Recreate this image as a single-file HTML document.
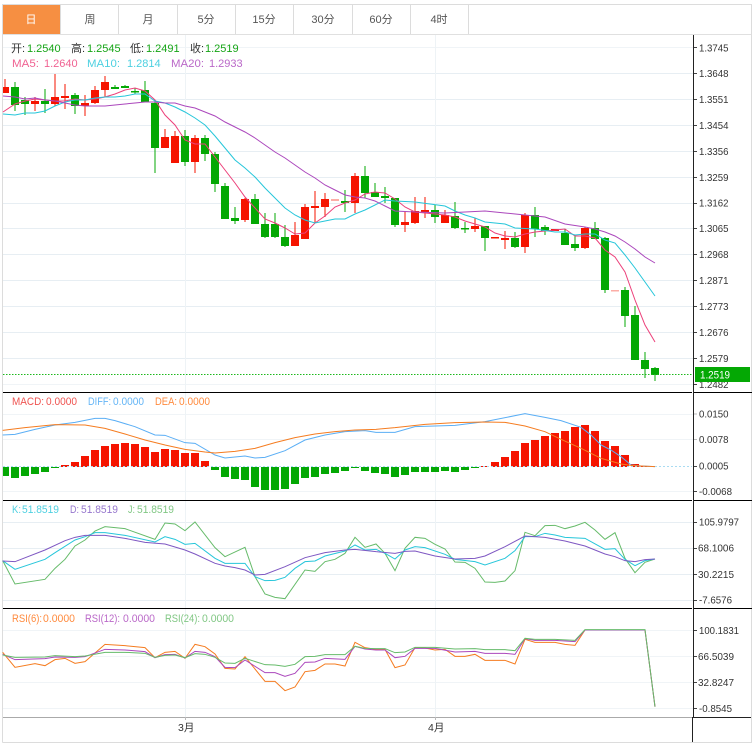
<!DOCTYPE html>
<html lang="zh">
<head>
<meta charset="utf-8">
<title>K线</title>
<style>
html,body{margin:0;padding:0;background:#fff;width:752px;height:750px;overflow:hidden}
svg{display:block}
text{font-family:"Liberation Sans","Noto Sans CJK SC",sans-serif;font-size:11px}
.ax text{font-size:10.5px;fill:#333}
.tb text{font-size:11px;fill:#555;text-anchor:middle}
.l{fill:none;stroke-width:3}
</style>
</head>
<body>
<svg width="752" height="750" viewBox="0 0 752 750" xmlns="http://www.w3.org/2000/svg">
<rect width="752" height="750" fill="#fff"/>

<!-- grid -->
<path fill="none" stroke="#e7eef3" d="M3 73.5H693M3 99.5H693M3 125.5H693M3 151.5H693M3 177.5H693M3 203.5H693M3 228.5H693M3 254.5H693M3 280.5H693M3 306.5H693M3 332.5H693M3 358.5H693"/>
<path fill="none" stroke="#f0f4f7" d="M3 47.5H693M3 384.5H693M3 414.5H693M3 439.5H693M3 491.5H693M3 630.5H693M3 656.5H693M3 682.5H693M3 708.5H693"/>
<path fill="none" stroke="#e7eef3" d="M3 522.5H693M3 548.5H693M3 574.5H693M3 600.5H693"/>
<path fill="none" stroke="#eef3f6" d="M185.5 35V717M435.5 35V717"/>

<!-- frame and tabs -->
<path fill="none" stroke="#dcdcdc" d="M2.5 742.5V4.5H751.5V742.5H2.5"/>
<path fill="none" stroke="#e0e0e0" d="M3 34.5H751"/>
<rect x="3" y="5" width="57" height="29" fill="#f68f42"/>
<path fill="none" stroke="#dcdcdc" d="M60.5 5V34M118.5 5V34M177.5 5V34M235.5 5V34M293.5 5V34M352.5 5V34M410.5 5V34M468.5 5V34"/>
<g class="tb">
<text x="31" y="23" style="fill:#fff">日</text>
<text x="90" y="23">周</text>
<text x="148" y="23">月</text>
<text x="206" y="23">5分</text>
<text x="264" y="23">15分</text>
<text x="323" y="23">30分</text>
<text x="381" y="23">60分</text>
<text x="439" y="23">4时</text>
</g>

<!-- wicks -->
<path fill="none" stroke="#f51400" stroke-width="1" d="M5 79V93M35 97V111M55 74V106M65 84V109M85 95V116M95 86V104M105 76V97M165 129V148M175 131V163M195 135V173M245 198V222M295 222V246M305 204V239M315 191V223M325 193V217M355 173V213M405 212V232M415 197V224M425 197V218M445 210V223M475 218V232M505 231V249M525 213V253M585 227V249"/>
<path fill="none" stroke="#04a804" stroke-width="1" d="M15 82V111M25 97V115M45 89V113M75 93V114M115 85V89M125 85V88M135 88V94M145 81V102M155 100V173M185 130V166M205 135V161M215 152V192M225 183V219M235 207V224M255 194V224M265 213V238M275 213V238M285 225V247M345 190V212M365 166V198M375 183V197M385 187V203M395 198V227M435 205V223M455 202V229M465 222V233M485 226V251M515 232V248M535 207V237M545 225V235M565 229V245M575 235V251M595 222V239M605 237V293M625 287V327M635 306V360M645 352V378M655 367V381"/>

<!-- bodies -->
<path fill="none" stroke="#f51400" stroke-width="8" d="M35 101V104M55 97V104M65 96V98M85 103V106M95 90V103M105 82V90M165 137V148M175 136V163M195 138V162M245 199V220M295 235V246M305 207V239M315 206V208M325 199V207M355 176V203M405 222V225M415 211V223M425 210V212M445 215V223M475 226V229M495 237V238.500M505 238V240M525 215V247M555 229V231M585 228V248"/>
<path fill="none" stroke="#f51400" stroke-width="6" d="M6 87V93"/>
<path fill="none" stroke="#f51400" stroke-opacity=".35" stroke-width="8" d="M335 199V201M615 290V291.500"/>
<path fill="none" stroke="#04a804" stroke-width="8" d="M15 87V105M25 100V104M45 101V104M75 95V106M115 87V89M125 86V88M135 91V92.500M145 90V102M155 103V148M185 136V162M205 138V154M215 154V184M225 186V219M235 218V221M255 199V224M265 224V237M275 224V237M285 237V246M345 201V203M365 176V193M375 192V197M385 196V198M395 198V225M435 210V217M455 216V228M465 228V229.500M485 226V238M515 238V247M535 215V229M545 227V231M565 233V245M575 244V248M595 228V239M605 238V290M625 290V316M635 315V360M645 360V369M655 368V375"/>

<!-- moving averages -->
<polyline fill="none" stroke="#ec407a" points="3,112 15,104 25,101 35,99 45,100 55,101 65,101 75,99 85,100 95,99 105,97 115,94 125,90 135,88 145,91 155,100 165,115 175,125 185,140 195,144 205,144 215,157 225,170 235,183 245,197 255,208 265,219 275,223 285,228 295,234 305,233 315,223 325,216 335,207 345,203 355,200 365,194 375,192 385,193 395,199 405,207 415,212 425,213 435,214 445,215 455,217 465,221 475,224 485,227 495,233 505,236 515,237 525,234 535,232 545,231 555,230 565,229 575,236 585,236 595,238 605,250 615,257 625,272 635,300 645,325 655,342"/>
<polyline fill="none" stroke="#26c6da" points="3,114 15,115 25,113 35,113 45,111 55,106 65,102 75,100 85,100 95,98 105,97 115,97 125,96 135,94 145,94 155,101 165,103 175,107 185,112 195,118 205,125 215,136 225,148 235,160 245,168 255,177 265,188 275,198 285,208 295,215 305,220 315,223 325,221 335,219 345,219 355,214 365,210 375,205 385,200 395,201 415,202 445,206 455,211 465,215 475,218 485,222 505,224 515,228 535,229 555,232 565,232 575,235 585,234 595,234 605,240 615,243 625,255 635,268 645,282 655,296"/>
<polyline fill="none" stroke="#ab47bc" points="3,96 15,97 25,99 35,98 45,100 55,101 65,103 75,105 85,106 95,106 105,106 115,105 125,104 135,103 145,102 155,102 165,103 175,103 185,106 195,108 205,112 215,116 225,122 235,127 245,132 255,138 265,145 275,152 285,158 295,165 305,172 315,178 325,185 335,190 345,195 355,197 365,198 375,201 385,206 395,211 415,212 445,213 465,212 485,211 505,213 525,215 545,217 565,224 585,227 595,229 605,232 615,236 625,242 635,249 645,257 655,263"/>

<!-- MACD histogram -->
<path fill="none" stroke="#f51400" stroke-width="8" d="M65 467V465M75 467V462M85 467V456M95 467V450M105 467V446M115 467V444M125 467V443M135 467V444M145 467V447M155 467V452M165 467V449M175 467V450M185 467V453M195 467V453M205 467V461M485 467V466M495 467V462M505 467V457M515 467V451M525 467V443M535 467V440M545 467V436M555 467V433M565 467V431M575 467V427M585 467V425M595 467V431M605 467V441M615 467V446M625 467V455M635 467V464M645 467V466"/>
<path fill="none" stroke="#04a804" stroke-width="8" d="M15 467V478M25 467V476M35 467V474M45 467V472M55 467V468M215 467V470M225 467V477M235 467V479M245 467V480M255 467V487M265 467V490M275 467V490M285 467V489M295 467V484M305 467V478M315 467V477M325 467V474M335 467V473M345 467V471M355 467V468M365 467V471M375 467V473M385 467V474M395 467V477M405 467V475M415 467V472M425 467V472M435 467V472M445 467V471M455 467V472M465 467V470M475 467V468"/>
<path fill="none" stroke="#04a804" stroke-width="6" d="M6 467V476"/>
<path fill="none" stroke="#a9dcf2" stroke-dasharray="2 2" d="M3 466.500H692"/>

<!-- MACD lines -->
<g transform="translate(0,390) scale(.33333)">
<polyline class="l" stroke="#5aaef5" points="8,135 45,133 105,118 165,105 225,97 285,85 315,85 345,92 405,110 465,135 495,136 555,158 585,160 645,195 675,204 735,198 765,204 795,202 855,182 915,150 975,135 1035,125 1095,122 1128,127 1185,127 1245,110 1365,106 1455,95 1575,71 1635,82 1683,92 1743,112 1773,135 1803,165 1833,180 1863,200 1893,225 1923,228 1965,230"/>
<polyline class="l" stroke="#f57c20" points="8,121 75,113 165,104 255,105 315,115 375,132 435,150 495,165 555,178 615,186 645,189 705,184 765,175 825,158 885,143 945,132 1005,125 1065,120 1128,118 1185,113 1275,103 1365,98 1455,96 1515,97 1575,108 1635,125 1683,148 1743,175 1803,205 1863,222 1893,226 1923,228 1965,230"/>
</g>

<!-- KDJ -->
<g transform="translate(0,500) scale(.33333)">
<polyline class="l" stroke="#66bb6a" points="8,182 45,252 135,238 165,205 195,178 225,138 255,120 285,93 315,80 375,86 465,118 495,69 525,72 555,92 585,66 645,143 675,170 735,142 765,230 795,282 825,292 855,296 915,210 945,214 975,185 1005,178 1035,160 1065,112 1095,142 1128,132 1155,160 1185,212 1215,145 1245,112 1275,115 1305,133 1335,147 1365,186 1395,187 1425,205 1455,246 1485,247 1515,243 1545,212 1575,97 1605,107 1635,77 1665,76 1695,86 1725,78 1755,67 1785,90 1815,118 1845,98 1875,175 1905,218 1935,187 1965,177"/>
<polyline class="l" stroke="#26c6da" points="8,182 45,208 135,178 165,158 225,120 255,110 285,98 315,98 375,106 465,126 495,110 525,118 555,133 585,130 645,175 675,190 735,190 765,230 795,242 825,241 855,232 885,205 915,185 945,183 975,168 1035,153 1065,135 1095,150 1128,148 1155,160 1185,177 1215,150 1245,140 1275,143 1335,163 1365,178 1425,185 1455,195 1515,175 1545,152 1575,110 1605,110 1635,100 1665,105 1695,112 1755,115 1815,148 1845,146 1875,178 1905,197 1935,182 1965,177"/>
<polyline class="l" stroke="#7e57c2" points="8,183 45,185 135,150 195,122 225,112 255,106 315,106 375,115 435,127 495,132 555,150 585,162 645,190 675,198 705,203 735,210 765,225 795,223 855,200 915,173 975,158 1035,150 1065,148 1128,155 1185,160 1215,154 1245,153 1305,168 1365,177 1425,175 1455,168 1515,140 1575,108 1635,112 1695,123 1755,138 1815,162 1845,170 1875,182 1905,185 1935,179 1965,177"/>
</g>

<!-- RSI -->
<g transform="translate(0,605) scale(.33333)">
<polyline class="l" stroke="#f57c20" points="8,142 45,187 105,176 135,182 165,164 195,160 225,175 255,170 315,118 375,122 435,128 465,158 495,142 525,139 555,160 585,118 615,125 645,147 675,190 705,192 735,155 795,229 825,229 855,257 885,246 915,200 945,196 975,177 1005,177 1035,183 1065,112 1095,128 1128,133 1155,133 1185,188 1215,180 1245,128 1275,129 1305,135 1335,133 1365,154 1395,154 1425,148 1455,166 1515,166 1545,177 1575,103 1605,112 1665,112 1695,118 1725,121 1755,75 1935,75 1965,305"/>
<polyline class="l" stroke="#ab47bc" points="8,148 45,164 135,161 165,156 225,157 255,155 315,133 375,135 435,140 465,158 495,149 525,148 555,159 585,139 615,142 645,155 675,187 705,188 735,165 795,203 825,203 855,214 885,205 915,172 945,171 975,160 1035,163 1065,124 1095,132 1128,135 1155,135 1185,158 1215,154 1245,130 1305,130 1365,141 1425,139 1455,145 1515,145 1545,148 1575,101 1605,106 1665,106 1725,110 1755,75 1935,75 1965,305"/>
<polyline class="l" stroke="#66bb6a" points="8,150 45,157 135,156 165,152 225,155 255,153 315,142 375,142 435,145 465,157 495,151 525,150 555,158 585,146 615,148 645,157 675,174 705,175 735,160 795,179 825,180 855,184 885,178 915,155 945,154 975,149 1035,149 1065,124 1095,130 1128,131 1155,131 1185,143 1215,141 1245,127 1305,127 1365,132 1425,131 1455,134 1515,134 1545,137 1575,100 1605,103 1665,103 1725,106 1755,74 1935,74 1965,305"/>
</g>

<!-- price line -->
<path fill="none" stroke="#1cb81c" stroke-dasharray="1.500 1.500" d="M3 374.500H692"/>

<!-- separators and axis -->
<path fill="none" stroke="#000" d="M3 392.500H692M694 392.500H752M3 500.500H692M694 500.500H752M3 608.500H692M694 608.500H752"/>
<path fill="none" stroke="#aaa" d="M3 717.500H692"/>
<path fill="none" stroke="#222" d="M693.500 35V717M692.500 717V742M693 717.500H751"/>
<path fill="none" stroke="#444" d="M694 47.500H697M694 73.500H697M694 99.500H697M694 125.500H697M694 151.500H697M694 177.500H697M694 203.500H697M694 228.500H697M694 254.500H697M694 280.500H697M694 306.500H697M694 332.500H697M694 358.500H697M694 384.500H697M694 466.500H697M694 491.500H697M694 522.500H697M694 548.500H697M694 574.500H697M694 600.500H697M694 630.500H697M694 656.500H697M694 682.500H697M694 708.500H697"/>
<path fill="none" stroke="#bbb" d="M694 414H697M694 439.500H697M185.500 717V720M435.500 717V720"/>

<g class="ax">
<text x="699" y="51.500" textLength="29.500" lengthAdjust="spacingAndGlyphs">1.3745</text>
<text x="699" y="77" textLength="29.500" lengthAdjust="spacingAndGlyphs">1.3648</text>
<text x="699" y="103" textLength="29.500" lengthAdjust="spacingAndGlyphs">1.3551</text>
<text x="699" y="129" textLength="29.500" lengthAdjust="spacingAndGlyphs">1.3454</text>
<text x="699" y="155" textLength="29.500" lengthAdjust="spacingAndGlyphs">1.3356</text>
<text x="699" y="181" textLength="29.500" lengthAdjust="spacingAndGlyphs">1.3259</text>
<text x="699" y="206.500" textLength="29.500" lengthAdjust="spacingAndGlyphs">1.3162</text>
<text x="699" y="232" textLength="29.500" lengthAdjust="spacingAndGlyphs">1.3065</text>
<text x="699" y="258" textLength="29.500" lengthAdjust="spacingAndGlyphs">1.2968</text>
<text x="699" y="284" textLength="29.500" lengthAdjust="spacingAndGlyphs">1.2871</text>
<text x="699" y="310" textLength="29.500" lengthAdjust="spacingAndGlyphs">1.2773</text>
<text x="699" y="336" textLength="29.500" lengthAdjust="spacingAndGlyphs">1.2676</text>
<text x="699" y="362" textLength="29.500" lengthAdjust="spacingAndGlyphs">1.2579</text>
<text x="699" y="388" textLength="29.500" lengthAdjust="spacingAndGlyphs">1.2482</text>
<text x="699" y="417.500" textLength="29.500" lengthAdjust="spacingAndGlyphs">0.0150</text>
<text x="699" y="443" textLength="29.500" lengthAdjust="spacingAndGlyphs">0.0078</text>
<text x="699" y="469.500" textLength="29.500" lengthAdjust="spacingAndGlyphs">0.0005</text>
<text x="699" y="495" textLength="33" lengthAdjust="spacingAndGlyphs">-0.0068</text>
<text x="699" y="525.500" textLength="40" lengthAdjust="spacingAndGlyphs">105.9797</text>
<text x="698" y="551.500" textLength="36" lengthAdjust="spacingAndGlyphs">68.1006</text>
<text x="698" y="578" textLength="36" lengthAdjust="spacingAndGlyphs">30.2215</text>
<text x="699" y="603.500" textLength="33" lengthAdjust="spacingAndGlyphs">-7.6576</text>
<text x="699" y="634" textLength="40" lengthAdjust="spacingAndGlyphs">100.1831</text>
<text x="698" y="660" textLength="36" lengthAdjust="spacingAndGlyphs">66.5039</text>
<text x="698" y="686" textLength="36" lengthAdjust="spacingAndGlyphs">32.8247</text>
<text x="699" y="712" textLength="33" lengthAdjust="spacingAndGlyphs">-0.8545</text>
<text x="178" y="731">3月</text>
<text x="428" y="731">4月</text>
</g>

<rect x="695" y="367" width="55" height="15" fill="#04a804"/>
<text x="700" y="378.500" fill="#fff" textLength="30" lengthAdjust="spacingAndGlyphs">1.2519</text>

<!-- legends -->
<text x="11" y="52" fill="#333">开:</text><text x="27" y="52" fill="#16a516">1.2540</text>
<text x="71" y="52" fill="#333">高:</text><text x="87" y="52" fill="#16a516">1.2545</text>
<text x="130" y="52" fill="#333">低:</text><text x="146" y="52" fill="#16a516">1.2491</text>
<text x="190" y="52" fill="#333">收:</text><text x="205" y="52" fill="#16a516">1.2519</text>

<text x="12" y="67" fill="#f06292" textLength="27" lengthAdjust="spacingAndGlyphs">MA5:</text><text x="44" y="67" fill="#f06292">1.2640</text>
<text x="87" y="67" fill="#4dd0e1" textLength="33" lengthAdjust="spacingAndGlyphs">MA10:</text><text x="127" y="67" fill="#4dd0e1">1.2814</text>
<text x="171" y="67" fill="#ba68c8" textLength="33" lengthAdjust="spacingAndGlyphs">MA20:</text><text x="209" y="67" fill="#ba68c8">1.2933</text>

<text x="12" y="405" fill="#ef5350" textLength="32" lengthAdjust="spacingAndGlyphs">MACD:</text><text x="46" y="405" fill="#ef5350" textLength="31" lengthAdjust="spacingAndGlyphs">0.0000</text>
<text x="88" y="405" fill="#64b5f6" textLength="23" lengthAdjust="spacingAndGlyphs">DIFF:</text><text x="113" y="405" fill="#64b5f6" textLength="31" lengthAdjust="spacingAndGlyphs">0.0000</text>
<text x="155" y="405" fill="#ff8a3d" textLength="22" lengthAdjust="spacingAndGlyphs">DEA:</text><text x="179" y="405" fill="#ff8a3d" textLength="31" lengthAdjust="spacingAndGlyphs">0.0000</text>

<text x="12" y="513" fill="#4dd0e1" textLength="9" lengthAdjust="spacingAndGlyphs">K:</text><text x="22" y="513" fill="#4dd0e1" textLength="37" lengthAdjust="spacingAndGlyphs">51.8519</text>
<text x="70" y="513" fill="#9575cd" textLength="9" lengthAdjust="spacingAndGlyphs">D:</text><text x="81" y="513" fill="#9575cd" textLength="37" lengthAdjust="spacingAndGlyphs">51.8519</text>
<text x="128" y="513" fill="#81c784" textLength="7" lengthAdjust="spacingAndGlyphs">J:</text><text x="137" y="513" fill="#81c784" textLength="37" lengthAdjust="spacingAndGlyphs">51.8519</text>

<text x="12" y="622" fill="#ff8a3d" textLength="30" lengthAdjust="spacingAndGlyphs">RSI(6):</text><text x="43" y="622" fill="#ff8a3d" textLength="32" lengthAdjust="spacingAndGlyphs">0.0000</text>
<text x="85" y="622" fill="#ba68c8" textLength="35" lengthAdjust="spacingAndGlyphs">RSI(12):</text><text x="123" y="622" fill="#ba68c8" textLength="32" lengthAdjust="spacingAndGlyphs">0.0000</text>
<text x="165" y="622" fill="#81c784" textLength="35" lengthAdjust="spacingAndGlyphs">RSI(24):</text><text x="202" y="622" fill="#81c784" textLength="32" lengthAdjust="spacingAndGlyphs">0.0000</text>
</svg>
</body>
</html>
